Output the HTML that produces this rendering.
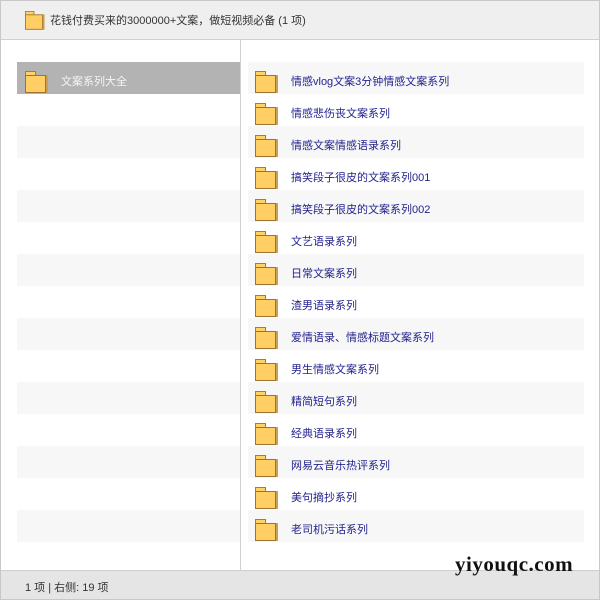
<!DOCTYPE html>
<html><head><meta charset="utf-8"><style>
*{margin:0;padding:0;box-sizing:border-box}
body{width:600px;height:600px;background:#fff;font-family:"Liberation Sans","Noto Sans CJK SC",sans-serif;position:relative;overflow:hidden}
.frame{position:absolute;left:0;top:0;width:600px;height:600px;border:1px solid #c8c8c8}
.hdr{position:absolute;left:1px;top:1px;width:598px;height:39px;background:#efefef;border-bottom:1px solid #cfcfcf}
.hdr span{position:absolute;left:49px;top:11px;font-size:11px;color:#333}
.div{position:absolute;left:240px;top:40px;width:1px;height:530px;background:#d0d0d0}
.ftr{position:absolute;left:1px;top:570px;width:598px;height:29px;background:#e5e5e5;border-top:1px solid #cfcfcf}
.ftr span{position:absolute;left:24px;top:8px;font-size:11px;color:#333}
.row{position:absolute;height:32px}
.l{left:17px;width:223px}
.r{left:248px;width:336px}
.lt{background:#f7f7f7}
.sel{background:#b3b3b3}
.f{position:absolute;width:22px;height:22px}
.f .tab{position:absolute;left:0;top:0;width:11px;height:5px;background:#ffd166;border:1px solid #a97c30;border-bottom:none}
.f .bd{position:absolute;left:0;top:4px;width:21px;height:18px;background:#ffcf66;border:1px solid #9e7430;box-shadow:2px 0 0 #c9a054}
.t{position:absolute;left:43px;top:11px;font-size:11px;color:#23238e}
.sel .t{color:#f5f5f5;left:44px}
.wm{position:absolute;left:455px;top:552px;font-family:"Liberation Serif",serif;font-weight:bold;font-size:21px;color:#111;letter-spacing:0.5px}
</style></head><body>
<div class="frame"></div>
<div class="hdr"><div class="f" style="left:24px;top:10px;transform:scale(.85);transform-origin:0 0"><div class="tab"></div><div class="bd"></div></div><span>花钱付费买来的3000000+文案，做短视频必备 (1 项)</span></div>
<div class="div"></div>
<div class="row l sel" style="top:62px"><div class="f" style="left:8px;top:9px"><div class="tab"></div><div class="bd"></div></div><span class="t">文案系列大全</span></div>
<div class="row l lt" style="top:126px"></div>
<div class="row l lt" style="top:190px"></div>
<div class="row l lt" style="top:254px"></div>
<div class="row l lt" style="top:318px"></div>
<div class="row l lt" style="top:382px"></div>
<div class="row l lt" style="top:446px"></div>
<div class="row l lt" style="top:510px"></div>
<div class="row r lt" style="top:62px"><div class="f" style="left:7px;top:9px"><div class="tab"></div><div class="bd"></div></div><span class="t">情感vlog文案3分钟情感文案系列</span></div>
<div class="row r" style="top:94px"><div class="f" style="left:7px;top:9px"><div class="tab"></div><div class="bd"></div></div><span class="t">情感悲伤丧文案系列</span></div>
<div class="row r lt" style="top:126px"><div class="f" style="left:7px;top:9px"><div class="tab"></div><div class="bd"></div></div><span class="t">情感文案情感语录系列</span></div>
<div class="row r" style="top:158px"><div class="f" style="left:7px;top:9px"><div class="tab"></div><div class="bd"></div></div><span class="t">搞笑段子很皮的文案系列001</span></div>
<div class="row r lt" style="top:190px"><div class="f" style="left:7px;top:9px"><div class="tab"></div><div class="bd"></div></div><span class="t">搞笑段子很皮的文案系列002</span></div>
<div class="row r" style="top:222px"><div class="f" style="left:7px;top:9px"><div class="tab"></div><div class="bd"></div></div><span class="t">文艺语录系列</span></div>
<div class="row r lt" style="top:254px"><div class="f" style="left:7px;top:9px"><div class="tab"></div><div class="bd"></div></div><span class="t">日常文案系列</span></div>
<div class="row r" style="top:286px"><div class="f" style="left:7px;top:9px"><div class="tab"></div><div class="bd"></div></div><span class="t">渣男语录系列</span></div>
<div class="row r lt" style="top:318px"><div class="f" style="left:7px;top:9px"><div class="tab"></div><div class="bd"></div></div><span class="t">爱情语录、情感标题文案系列</span></div>
<div class="row r" style="top:350px"><div class="f" style="left:7px;top:9px"><div class="tab"></div><div class="bd"></div></div><span class="t">男生情感文案系列</span></div>
<div class="row r lt" style="top:382px"><div class="f" style="left:7px;top:9px"><div class="tab"></div><div class="bd"></div></div><span class="t">精简短句系列</span></div>
<div class="row r" style="top:414px"><div class="f" style="left:7px;top:9px"><div class="tab"></div><div class="bd"></div></div><span class="t">经典语录系列</span></div>
<div class="row r lt" style="top:446px"><div class="f" style="left:7px;top:9px"><div class="tab"></div><div class="bd"></div></div><span class="t">网易云音乐热评系列</span></div>
<div class="row r" style="top:478px"><div class="f" style="left:7px;top:9px"><div class="tab"></div><div class="bd"></div></div><span class="t">美句摘抄系列</span></div>
<div class="row r lt" style="top:510px"><div class="f" style="left:7px;top:9px"><div class="tab"></div><div class="bd"></div></div><span class="t">老司机污话系列</span></div>
<div class="ftr"><span>1 项 | 右侧: 19 项</span></div>
<div class="wm">yiyouqc.com</div>
</body></html>
